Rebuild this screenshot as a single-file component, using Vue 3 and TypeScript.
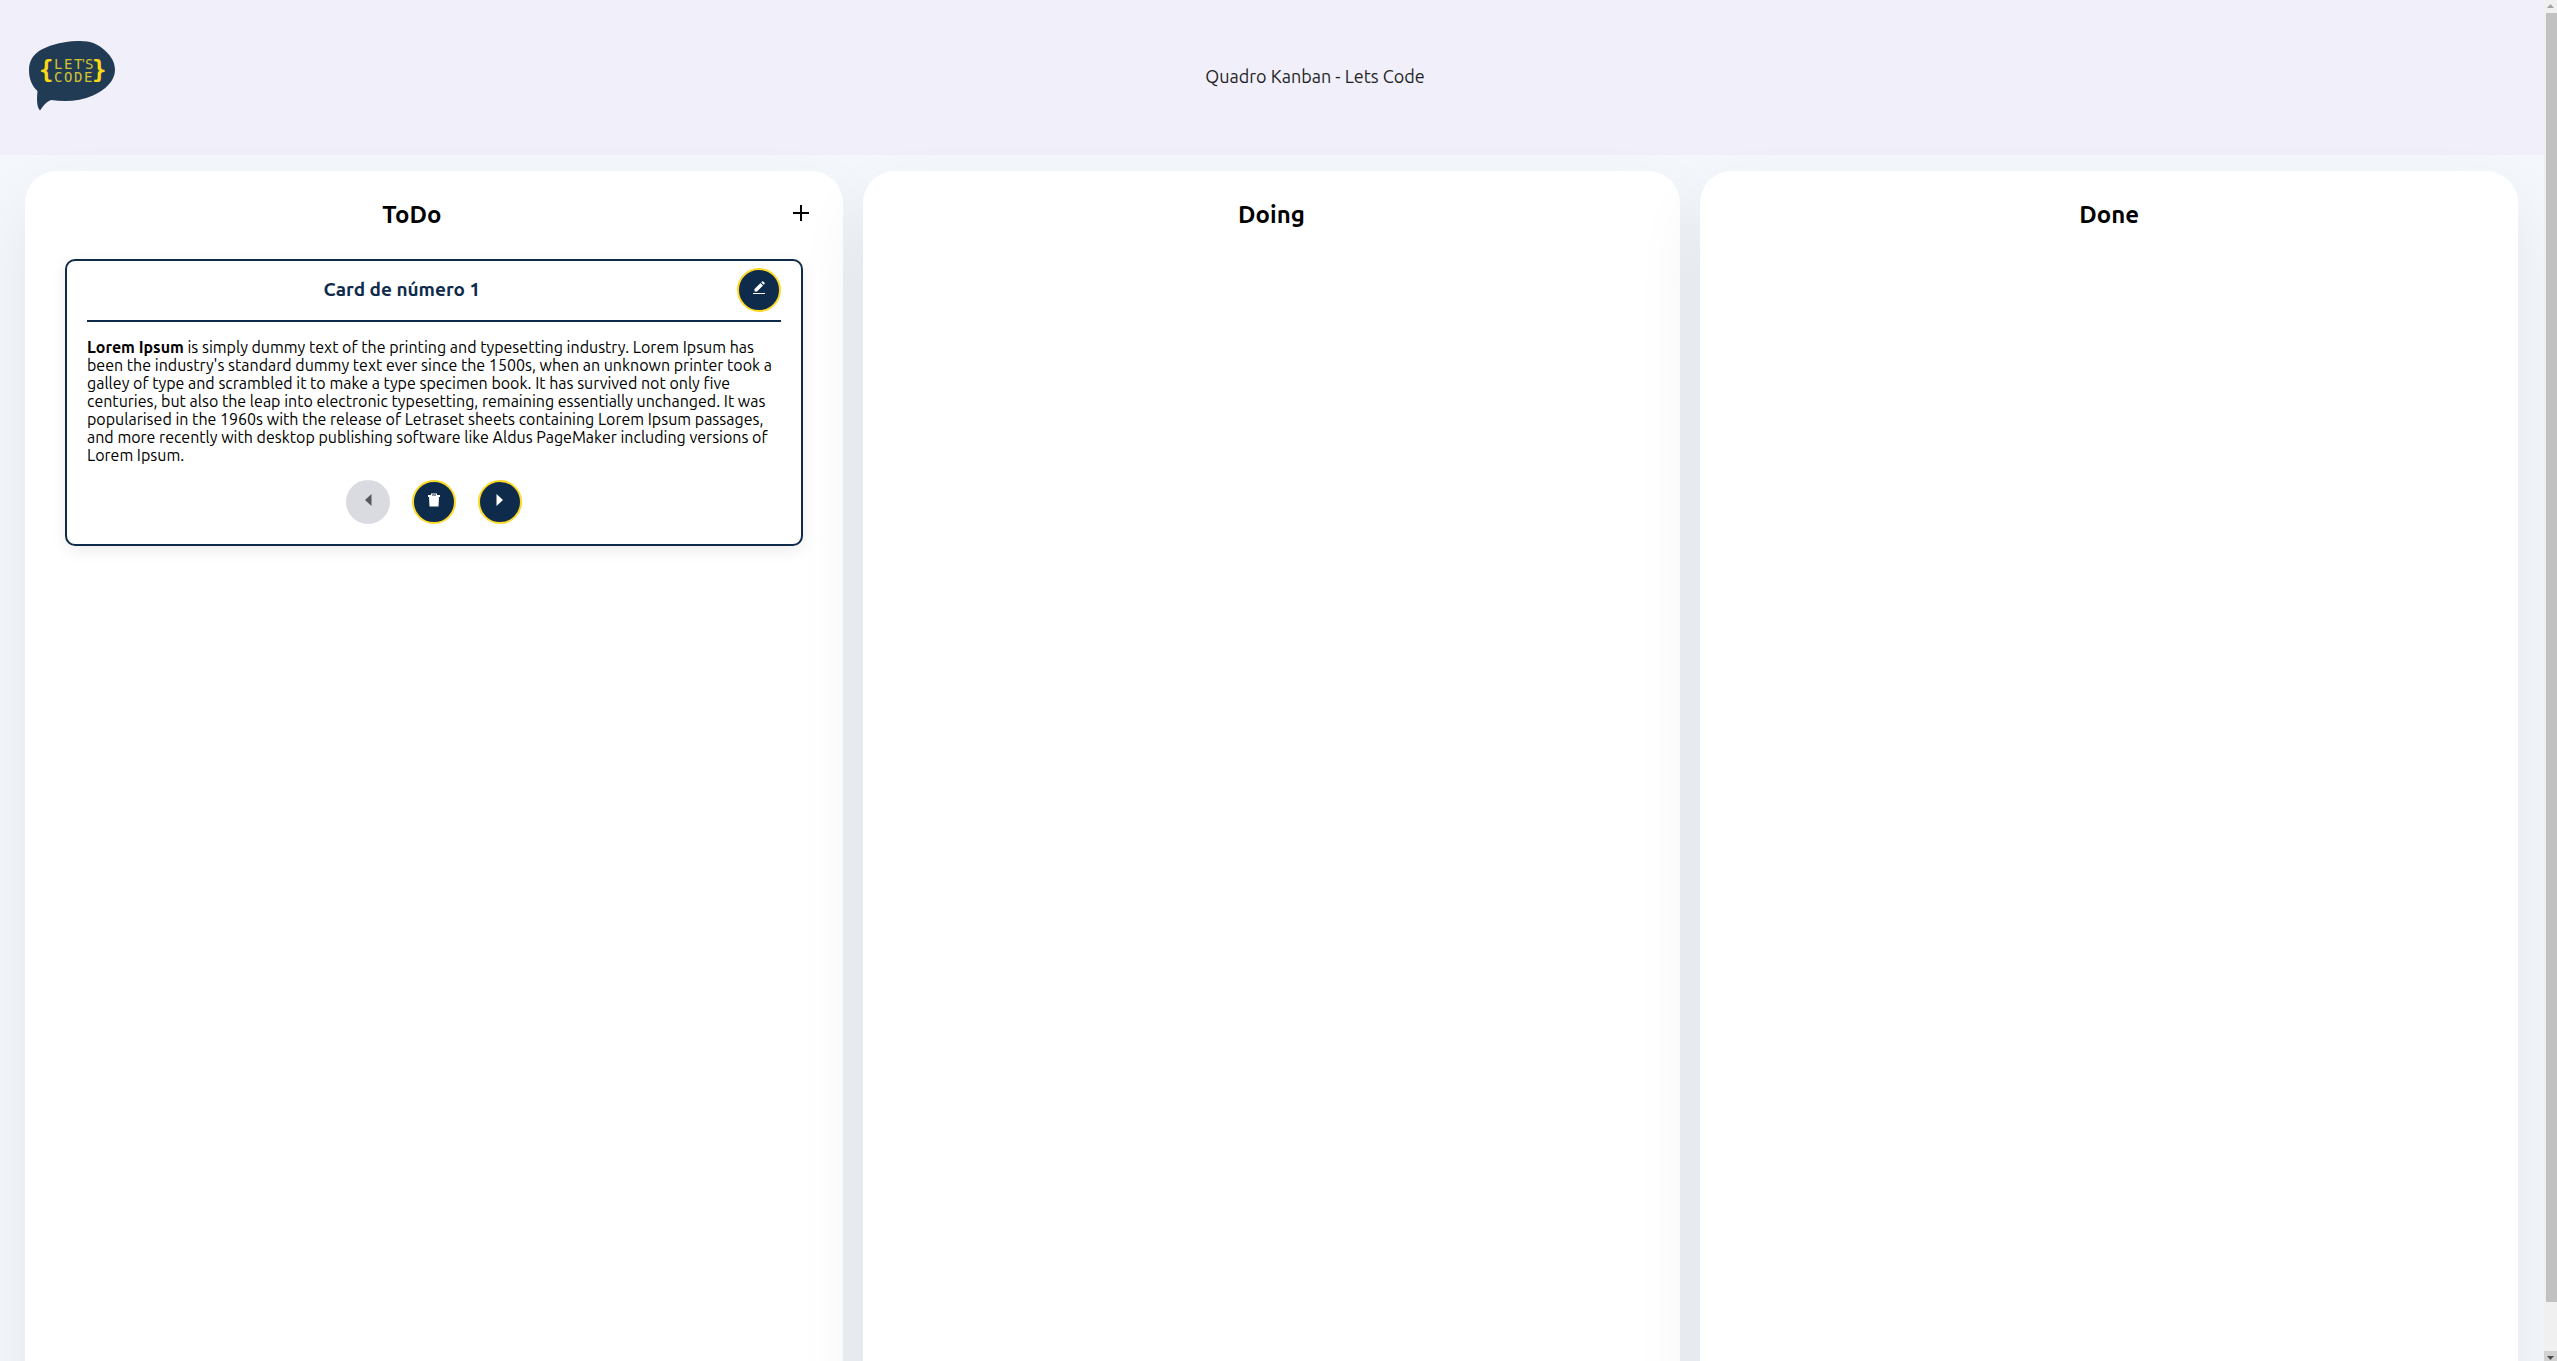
<script setup lang="ts">
interface Card {
  id: number
  title: string
  lead: string
  body: string
}

interface Column {
  id: string
  title: string
  canAdd: boolean
  cards: Card[]
}

const columns: Column[] = [
  {
    id: 'todo',
    title: 'ToDo',
    canAdd: true,
    cards: [
      {
        id: 1,
        title: 'Card de número 1',
        lead: 'Lorem Ipsum',
        body: "is simply dummy text of the printing and typesetting industry. Lorem Ipsum has been the industry's standard dummy text ever since the 1500s, when an unknown printer took a galley of type and scrambled it to make a type specimen book. It has survived not only five centuries, but also the leap into electronic typesetting, remaining essentially unchanged. It was popularised in the 1960s with the release of Letraset sheets containing Lorem Ipsum passages, and more recently with desktop publishing software like Aldus PageMaker including versions of Lorem Ipsum.",
      },
    ],
  },
  { id: 'doing', title: 'Doing', canAdd: false, cards: [] },
  { id: 'done', title: 'Done', canAdd: false, cards: [] },
]
</script>

<template>
  <div class="window">
    <div class="page">
      <header class="topbar">
        <svg class="logo" viewBox="0 0 86 70" role="img" aria-label="Let's Code">
          <path
            fill="#223b54"
            d="M0 29C0 18 6 11 17 6.500C28 1.500 41 0 51 0C62 0 69 3 76 9.500C83 16 86 22 86 29C86 40 76 49 64 54.500C51 60.500 36 61 22 59C17 61 14 65 11 69.500C8 66 7.500 60 8.500 50C3 45 0 38 0 29Z"
          />
          <g fill="#d3c431" class="logo-word">
            <text x="25 35 45" y="28">LET<tspan class="logo-tick" x="53">'</tspan><tspan x="56">S</tspan></text>
            <text x="25 35 45 55" y="41">CODE</text>
          </g>
          <g fill="#fcd913" class="logo-brace">
            <text x="10" y="37">{</text>
            <text x="63" y="37">}</text>
          </g>
        </svg>
        <p class="topbar-title">Quadro Kanban - Lets Code</p>
      </header>

      <main class="board">
        <section v-for="column in columns" :key="column.id" class="column">
          <div class="column-head">
            <h2>{{ column.title }}</h2>
            <button v-if="column.canAdd" class="add" type="button" aria-label="Adicionar card">
              <svg width="16" height="16" viewBox="0 0 16 16">
                <path d="M7 0h2v7h7v2H9v7H7V9H0V7h7z" />
              </svg>
            </button>
          </div>

          <article v-for="card in column.cards" :key="card.id" class="card">
            <div class="card-head">
              <h3>{{ card.title }}</h3>
              <button class="round" type="button" aria-label="Editar">
                <svg width="14" height="14" viewBox="0 0 14 14">
                  <path d="M1 12h12v1H1zM2.500 10.500V8L8.500 2l2.500 2.500-6 6zM9.200 1.300L10.200.4q.5-.4 1 0l1.400 1.400q.4.500 0 1l-.9 1z" />
                </svg>
              </button>
            </div>
            <p class="card-text"><strong>{{ card.lead }}</strong> {{ card.body }}</p>
            <div class="card-actions">
              <button class="round" type="button" aria-label="Mover para a esquerda" disabled>
                <svg width="14" height="14" viewBox="0 0 14 14"><path d="M10.500 1v12L4 7z" /></svg>
              </button>
              <button class="round" type="button" aria-label="Excluir">
                <svg width="14" height="14" viewBox="0 0 14 14">
                  <path fill-rule="evenodd" d="M4 .500h6V2h3v2H1V2h3zM5 1.500v1h4v-1zM2 4h10l-.5 9.500h-9z" />
                </svg>
              </button>
              <button class="round" type="button" aria-label="Mover para a direita">
                <svg width="14" height="14" viewBox="0 0 14 14"><path d="M3.500 1v12L10 7z" /></svg>
              </button>
            </div>
          </article>
        </section>
      </main>
    </div>

    <div class="scrollbar" aria-hidden="true">
      <svg class="arrow" width="13" height="13" viewBox="0 0 13 13"><path fill="#a3a3a3" d="M3 8h7L6.500 4z" /></svg>
      <div class="thumb"></div>
      <svg class="arrow arrow-down" width="13" height="10" viewBox="0 0 13 10"><path fill="#505050" d="M3 5h7L6.500 9z" /></svg>
    </div>
  </div>
</template>

<style>
body {
  margin: 0;
}
</style>

<style scoped>
.window {
  display: flex;
  height: 100vh;
  overflow: hidden;
  background: #f4f8fd;
  color: #000;
  font-family: Ubuntu, "Noto Sans", sans-serif;
  font-size: 16px;
  line-height: 18px;
}

.page {
  flex: 1;
  min-width: 0;
  overflow: hidden;
}

.topbar {
  display: flex;
  align-items: center;
  height: 152px;
  padding: 0 29px 3px;
  background: #f0effa;
}

.logo {
  width: 86px;
  height: 70px;
}

.logo-word {
  font-family: "DejaVu Sans Mono", monospace;
  font-size: 14px;
}

.logo-tick {
  font-family: "Liberation Sans", sans-serif;
}

.logo-brace {
  font-family: "DejaVu Sans Mono", monospace;
  font-size: 24px;
  font-weight: 700;
}

.topbar-title {
  flex: 1;
  margin: 0;
  color: #1f1f24;
  font-size: 18px;
  line-height: 24px;
  text-align: center;
}

.board {
  display: flex;
  gap: 20px;
  padding: 16px 26px 16px 25px;
}

.column {
  flex: 1;
  min-width: 0;
  min-height: 100vh;
  border-radius: 32px;
  background: #fff;
  box-shadow: 0 30px 70px rgba(0, 0, 0, 0.07);
}

.column-head {
  display: flex;
  align-items: center;
  height: 88px;
  padding: 0 20px;
}

.column-head h2 {
  flex: 1;
  margin: 0;
  font-size: 24px;
  line-height: 28px;
  text-align: center;
}

.add {
  width: 44px;
  height: 44px;
  padding: 0;
  border: 0;
  background: none;
}

.card {
  margin: 0 40px;
  padding: 0 20px 20px;
  border: 2px solid #0f2b4b;
  border-radius: 10px;
  background: #fff;
  box-shadow: 0 5px 15px rgba(0, 0, 0, 0.08);
}

.card-head {
  display: flex;
  align-items: center;
  gap: 20px;
  height: 58px;
  padding-bottom: 1px;
  border-bottom: 2px solid #0f2b4b;
}

.card-head h3 {
  flex: 1;
  margin: 0;
  padding-bottom: 2px;
  color: #0f2b4b;
  font-size: 19px;
  line-height: 24px;
  text-align: center;
}

.round {
  width: 44px;
  height: 44px;
  padding: 0;
  border: 2px solid #fdd926;
  border-radius: 50%;
  background: #0f2b4b;
  fill: #fff;
}

.add svg,
.round svg {
  display: block;
  margin: 0 auto 4px;
}

.round:disabled {
  border-color: #dadbe1;
  background: #dadbe1;
  fill: #57585b;
}

.card-text {
  margin: 16px 0;
}

.card-actions {
  display: flex;
  justify-content: center;
  gap: 22px;
}

.scrollbar {
  display: flex;
  flex-direction: column;
  width: 13px;
  background: #f0f0f0;
}

.arrow {
  display: block;
}

.arrow-down {
  background: #d2d2d2;
}

.thumb {
  flex: 1;
  margin: 0 0 49px 2px;
  background: #c1c1c1;
}
</style>
